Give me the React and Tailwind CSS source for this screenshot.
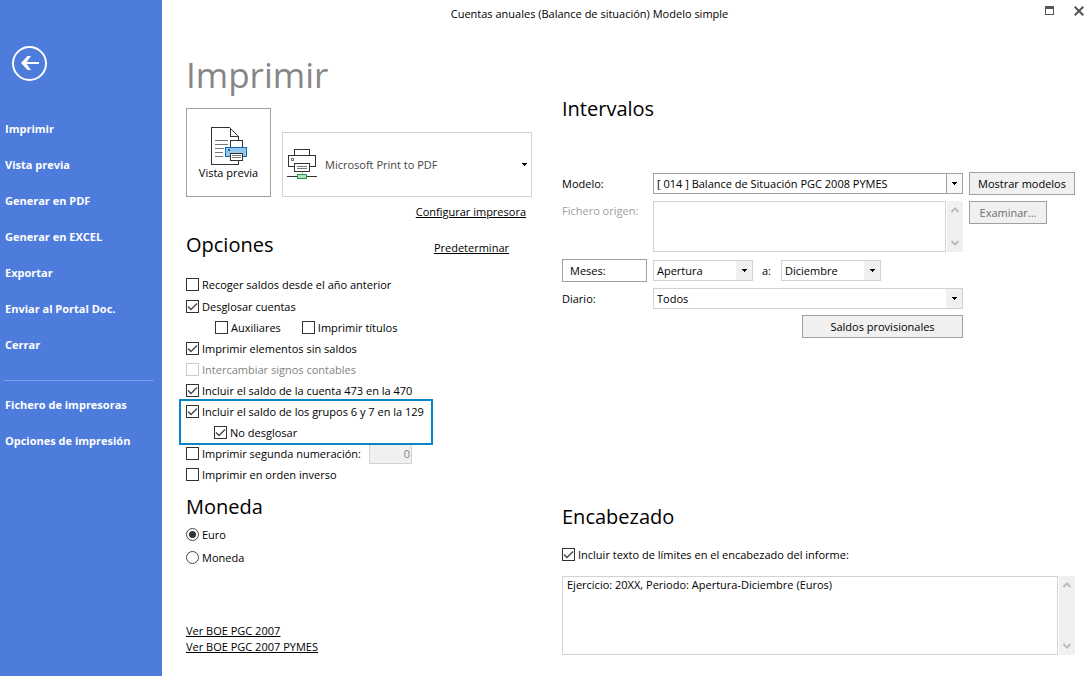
import React, { useState } from "react";
import clsx from "clsx";

const MENU = ["Imprimir", "Vista previa", "Generar en PDF", "Generar en EXCEL", "Exportar", "Enviar al Portal Doc.", "Cerrar"];
const MENU_SETUP = ["Fichero de impresoras", "Opciones de impresión"];

function Sidebar() {
  return (
    <aside className="w-[162px] shrink-0 bg-[#4e7cdc] pt-[45px] font-bold text-white">
      <button type="button" aria-label="Volver" className="ml-[11px] block">
        <svg width="36" height="36" viewBox="0 0 36 36" fill="none" stroke="#fff">
          <circle cx="18.5" cy="18.5" r="16.5" strokeWidth="2" />
          <path d="M28 18H12" strokeWidth="2" />
          <path d="M20 11H16.5L10 18L16.5 25H20L15 18Z" fill="#fff" stroke="none" />
        </svg>
      </button>
      <nav className="mt-[30px]">
        {MENU.map((m) => (
          <a key={m} href="#" className="flex h-9 items-center pl-[5px]">{m}</a>
        ))}
        <hr className="mx-1 mt-[17px] mb-[6px] w-[150px] border-[#7a9de5]" />
        {MENU_SETUP.map((m) => (
          <a key={m} href="#" className="flex h-9 items-center pl-[5px]">{m}</a>
        ))}
      </nav>
    </aside>
  );
}

function Check({ label, checked = false, disabled = false, className }) {
  const [on, setOn] = useState(checked);
  return (
    <label className={clsx("flex h-[21px] items-center gap-[3px] whitespace-nowrap", disabled && "text-[#838383]", className)}>
      <span className="grid">
        <input
          type="checkbox"
          checked={on}
          disabled={disabled}
          onChange={() => setOn(!on)}
          className="peer col-start-1 row-start-1 size-[13px] appearance-none border border-[#333] bg-white disabled:border-[#ccc]"
        />
        <svg width="13" height="13" viewBox="0 0 13 13" className="pointer-events-none invisible col-start-1 row-start-1 peer-checked:visible">
          <path d="M2 6.5L5 9.5L11 3.5" fill="none" stroke="#444" strokeWidth="1.3" />
        </svg>
      </span>
      {label}
    </label>
  );
}

function Radio({ label, name, defaultChecked }) {
  return (
    <label className="flex h-[23px] items-center gap-[3px]">
      <span className="grid place-items-center">
        <input
          type="radio"
          name={name}
          defaultChecked={defaultChecked}
          className="peer col-start-1 row-start-1 size-[13px] appearance-none rounded-full border border-[#444] bg-white"
        />
        <span className="pointer-events-none invisible col-start-1 row-start-1 size-[7px] rounded-full bg-[#333] peer-checked:visible" />
      </span>
      {label}
    </label>
  );
}

function Caret() {
  return (
    <svg width="5" height="3" viewBox="0 0 5 3" shapeRendering="crispEdges">
      <path d="M0 0H5V1H4V2H3V3H2V2H1V1H0Z" />
    </svg>
  );
}

function Combo({ id, value, label, strong, className }) {
  return (
    <div className={clsx("relative h-[21px]", className)}>
      <select
        id={id}
        aria-label={label}
        className={clsx("h-full w-full appearance-none border bg-white pl-[3px] pr-5", strong ? "border-[#a0a0a0]" : "border-[#d2d2d2]")}
      >
        <option>{value}</option>
      </select>
      <span
        className={clsx(
          "pointer-events-none absolute inset-y-px right-px flex w-4 items-center justify-center",
          strong ? "border-l border-[#a0a0a0] bg-[#f8f8f8]" : "bg-[#f0f0f0]"
        )}
      >
        <Caret />
      </span>
    </div>
  );
}

function PushButton({ className, ...props }) {
  return <button type="button" className={clsx("h-[23px] border border-[#a0a0a0] bg-[#f0f0f0]", className)} {...props} />;
}

function ScrollTrack() {
  return (
    <div className="flex w-4 shrink-0 flex-col items-center justify-between bg-[#f0f0f0] py-[6px]">
      <svg width="8" height="6" viewBox="0 0 8 6" fill="none" stroke="#bcbcbc" strokeWidth="2">
        <path d="M0.5 5L4 1.5L7.5 5" />
      </svg>
      <svg width="8" height="6" viewBox="0 0 8 6" fill="none" stroke="#bcbcbc" strokeWidth="2">
        <path d="M0.5 1L4 4.5L7.5 1" />
      </svg>
    </div>
  );
}

function PreviewIcon() {
  return (
    <svg width="36" height="38" viewBox="0 0 36 38" fill="none" stroke="#333" shapeRendering="crispEdges">
      <path d="M27.5 13V9.5L18.5 0.5H0.5V37.5H27.5V33" fill="#fff" />
      <path d="M19.5 0.5V9.5H27.5" />
      <path d="M4 13.5H17M4 17.5H17M4 21.5H13M4 25.5H12M4 29.5H12" stroke="#777" />
      <path d="M19.5 20V13.5H31.5V20" fill="#fff" />
      <path d="M14.5 20.5H35.5V29.5H14.5Z" fill="#92c8f0" stroke="#1667b0" />
      <rect x="17" y="22" width="2" height="2" fill="#1667b0" stroke="none" />
      <path d="M19.5 26.5H31.5V33.5H19.5Z" fill="#fff" />
      <path d="M21 28.5H30M21 30.5H30" stroke="#777" />
    </svg>
  );
}

function PrinterIcon() {
  return (
    <svg width="30" height="31" viewBox="0 0 30 31" fill="none" stroke="#333" shapeRendering="crispEdges">
      <path d="M7.5 7V0.5H22.5V7" />
      <path d="M7.5 17.5H1.5V6.5H28.5V17.5H22.5" />
      <rect x="4.5" y="9.5" width="2" height="2" stroke="#777" />
      <path d="M7.5 14.5H22.5V22.5H7.5Z" fill="#fff" />
      <path d="M10 17.5H20M10 19.5H20" stroke="#777" />
      <path d="M15 23V26" stroke="#aaa" />
      <path d="M0 27.5H30" />
      <rect x="10.5" y="25.5" width="9" height="4" fill="#b5e0c0" stroke="#1f9a48" />
    </svg>
  );
}

function TitleBar() {
  return (
    <header className="flex h-7 items-center">
      <div className="flex-1 text-center">Cuentas anuales (Balance de situación) Modelo simple</div>
      <div className="flex w-[75px] items-center justify-end gap-5 pr-2 pb-[7px]">
        <button type="button" aria-label="Maximizar">
          <svg width="9" height="9" viewBox="0 0 9 9" fill="#555" shapeRendering="crispEdges" className="block">
            <path d="M0 0H9V9H0ZM1 3V8H8V3Z" fillRule="evenodd" />
          </svg>
        </button>
        <button type="button" aria-label="Cerrar">
          <svg width="10" height="10" viewBox="0 0 10 10" stroke="#555" strokeWidth="2" className="block">
            <path d="M0.7 0.7L9.3 9.3M9.3 0.7L0.7 9.3" />
          </svg>
        </button>
      </div>
    </header>
  );
}

function PrintColumn() {
  return (
    <div className="w-[346px] shrink-0">
      <h1 className="mt-[22px] text-[35px] leading-[50px] text-[#868686]">Imprimir</h1>

      <div className="mt-2 flex items-end justify-between">
        <button type="button" className="flex h-[89px] w-[85px] flex-col items-center border border-[#a0a0a0] pt-[18px]">
          <PreviewIcon />
          <span className="leading-4">Vista previa</span>
        </button>
        <div className="relative h-[65px] w-[250px]">
          <select aria-label="Impresora" className="h-full w-full appearance-none border border-[#d2d2d2] bg-white pl-[42px] text-[#444]">
            <option>Microsoft Print to PDF</option>
          </select>
          <span className="pointer-events-none absolute inset-y-0 left-[5px] flex items-center">
            <PrinterIcon />
          </span>
          <span className="pointer-events-none absolute inset-y-0 right-[5px] flex items-center">
            <Caret />
          </span>
        </div>
      </div>

      <div className="mt-[7px] flex justify-end pr-[6px]">
        <a href="#" className="underline">Configurar impresora</a>
      </div>

      <div className="mt-[11px] flex items-center justify-between pr-[23px]">
        <h2 className="text-[20px] leading-7">Opciones</h2>
        <a href="#" className="pt-[6px] underline">Predeterminar</a>
      </div>

      <div className="mt-[15px]">
        <Check label="Recoger saldos desde el año anterior" />
        <Check label="Desglosar cuentas" checked className="mt-px" />
        <div className="flex gap-[21px] pl-[29px]">
          <Check label="Auxiliares" />
          <Check label="Imprimir títulos" />
        </div>
        <Check label="Imprimir elementos sin saldos" checked />
        <Check label="Intercambiar signos contables" disabled />
        <Check label="Incluir el saldo de la cuenta 473 en la 470" checked />
        <div className="-ml-[5px] w-[250px] pl-[5px] outline-2 outline-[#0a84c8]">
          <Check label="Incluir el saldo de los grupos 6 y 7 en la 129" checked />
          <Check label="No desglosar" checked className="pl-7" />
        </div>
        <div className="flex items-center">
          <Check label="Imprimir segunda numeración:" className="w-[183px]" />
          <input
            type="text"
            disabled
            defaultValue="0"
            aria-label="Segunda numeración"
            className="h-5 w-[43px] border border-[#d2d2d2] bg-[#f0f0f0] pr-px text-right text-[#838383]"
          />
        </div>
        <Check label="Imprimir en orden inverso" />
      </div>

      <h2 className="mt-2 text-[20px] leading-7">Moneda</h2>
      <div className="mt-[2px]">
        <Radio name="moneda" label="Euro" defaultChecked />
        <Radio name="moneda" label="Moneda" />
      </div>

      <div className="mt-[54px] flex flex-col items-start leading-4 underline">
        <a href="#">Ver BOE PGC 2007</a>
        <a href="#">Ver BOE PGC 2007 PYMES</a>
      </div>
    </div>
  );
}

function ReportColumn() {
  return (
    <div className="min-w-0 flex-1">
      <h2 className="mt-[67px] text-[20px] leading-7">Intervalos</h2>

      <div className="mt-[49px] grid grid-cols-[85px_1fr_106px] gap-y-[6px]">
        <label htmlFor="modelo" className="self-center">Modelo:</label>
        <Combo id="modelo" value="[ 014 ] Balance de Situación PGC 2008 PYMES" strong className="mx-[6px] self-center" />
        <PushButton>Mostrar modelos</PushButton>

        <label htmlFor="origen" className="pt-[2px] text-[#a0a0a0]">Fichero origen:</label>
        <div className="mx-[6px] mb-px flex gap-px">
          <textarea id="origen" disabled className="h-[51px] min-w-0 flex-1 resize-none border border-[#d2d2d2] bg-white" />
          <ScrollTrack />
        </div>
        <PushButton disabled className="w-[78px] text-[#6d6d6d]">Examinar...</PushButton>

        <button type="button" className="h-[23px] border border-[#a0a0a0] pl-[7px] text-left">Meses:</button>
        <div className="col-span-2 ml-[6px] flex items-center">
          <Combo label="Mes inicial" value="Apertura" className="w-[100px]" />
          <span className="w-7 pl-[9px]">a:</span>
          <Combo label="Mes final" value="Diciembre" className="w-[100px]" />
        </div>

        <label htmlFor="diario" className="self-center">Diario:</label>
        <Combo id="diario" value="Todos" className="mx-[6px]" />
        <PushButton className="col-start-2 mr-[6px] w-[161px] justify-self-end">Saldos provisionales</PushButton>
      </div>

      <h2 className="mt-[165px] text-[20px] leading-7">Encabezado</h2>
      <Check label="Incluir texto de límites en el encabezado del informe:" checked className="mt-[13px]" />
      <div className="mt-[11px] flex gap-px">
        <textarea
          aria-label="Texto del encabezado"
          defaultValue="Ejercicio: 20XX, Periodo: Apertura-Diciembre (Euros)"
          className="h-[79px] min-w-0 flex-1 resize-none border border-[#d2d2d2] bg-white px-1"
        />
        <ScrollTrack />
      </div>
    </div>
  );
}

export default function App() {
  return (
    <div className="flex min-h-screen bg-white font-['Open_Sans','Noto_Sans',sans-serif] text-[11px] leading-4 text-black">
      <Sidebar />
      <main className="min-w-0 flex-1">
        <TitleBar />
        <div className="flex gap-[30px] pr-[17px] pl-6">
          <PrintColumn />
          <ReportColumn />
        </div>
      </main>
    </div>
  );
}
